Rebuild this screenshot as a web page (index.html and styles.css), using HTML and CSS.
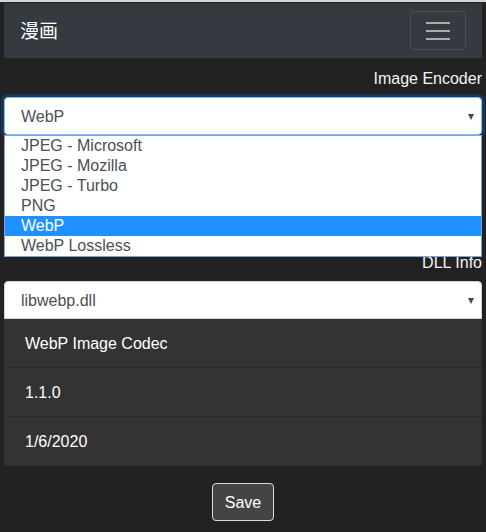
FILE: index.html
```html
<!DOCTYPE html>
<html lang="zh">
<head>
<meta charset="utf-8">
<title>漫画</title>
<link rel="stylesheet" href="styles.css">
</head>
<body>
<div class="page">
  <nav class="navbar">
    <span class="brand">漫画</span>
    <button class="toggler" type="button" aria-label="Toggle navigation">
      <span class="bar"></span>
      <span class="bar"></span>
      <span class="bar"></span>
    </button>
  </nav>
  <main class="content">
    <div class="group group-encoder">
      <label class="label">Image Encoder</label>
      <div class="select-wrap">
        <div class="select select-focus"><span class="select-text">WebP</span><span class="arrow"></span></div>
        <ul class="dropdown">
          <li class="option">JPEG - Microsoft</li>
          <li class="option">JPEG - Mozilla</li>
          <li class="option">JPEG - Turbo</li>
          <li class="option">PNG</li>
          <li class="option option-active">WebP</li>
          <li class="option">WebP Lossless</li>
        </ul>
      </div>
    </div>
    <div class="group">
      <label class="label">DLL Info</label>
      <div class="select select-attached"><span class="select-text">libwebp.dll</span><span class="arrow"></span></div>
      <ul class="list-group">
        <li class="list-item">WebP Image Codec</li>
        <li class="list-item">1.1.0</li>
        <li class="list-item">1/6/2020</li>
      </ul>
    </div>
    <div class="actions">
      <button class="btn" type="button">Save</button>
    </div>
  </main>
</div>
</body>
</html>
```
FILE: styles.css
```css
* { box-sizing: border-box; }

html, body {
  margin: 0;
  padding: 0;
  background: #222222;
}

body {
  font-family: "Liberation Sans", Arial, "Noto Sans CJK SC", sans-serif;
  font-size: 16px;
  color: #ffffff;
  border-top: 2px solid #d6d6d6;
}

.page {
  padding: 1px 4px 0;
}

.navbar {
  height: 55px;
  background: #343a40;
  padding: 8px 16px 8px 16px;
  display: flex;
  align-items: center;
  justify-content: space-between;
}

.brand {
  font-family: "Noto Sans CJK SC", "Noto Sans CJK JP", sans-serif;
  font-size: 19px;
  line-height: 24px;
  color: #ffffff;
  margin-top: -2px;
}

.toggler {
  width: 56px;
  height: 39px;
  background: transparent;
  border: 1px solid rgba(255, 255, 255, 0.1);
  border-radius: 4px;
  padding: 0;
  display: flex;
  flex-direction: column;
  align-items: center;
  justify-content: center;
  gap: 6px;
}

.bar {
  display: block;
  width: 24px;
  height: 2px;
  background: #a9abad;
}

.content {
  padding-top: 7px;
}

.group-encoder {
  margin-bottom: 114px;
}

.label {
  display: block;
  text-align: right;
  line-height: 24px;
  padding-top: 2px;
  margin-bottom: 6px;
  color: #f4f4f4;
}

.select-wrap {
  position: relative;
}

.select {
  height: 38px;
  background: #ffffff;
  border: 1px solid #ced4da;
  border-radius: 4px;
  padding: 1px 7px 0 16px;
  display: flex;
  align-items: center;
  justify-content: space-between;
  color: #495057;
}

.select-focus {
  border-color: #80bdff;
  box-shadow: 0 0 0 3px rgba(0, 123, 255, 0.25);
}

.select-attached {
  border-radius: 4px 4px 0 0;
}

.arrow {
  width: 0;
  height: 0;
  border-left: 3.5px solid transparent;
  border-right: 3.5px solid transparent;
  border-top: 6px solid #4a4a4a;
}

.dropdown {
  position: absolute;
  top: 100%;
  left: 0;
  right: 0;
  z-index: 10;
  margin: 0;
  padding: 0;
  list-style: none;
  background: #ffffff;
  border: 1px solid #7ba7dd;
}

.option {
  height: 20px;
  line-height: 20px;
  padding-left: 16px;
  color: #495057;
}

.option-active {
  background: #1e90ff;
  color: #ffffff;
}

.list-group {
  margin: 0;
  padding: 0;
  list-style: none;
  background: #333333;
  border-radius: 0 0 4px 4px;
}

.list-item {
  padding: 13px 21px 11px;
  line-height: 24px;
  border-bottom: 1px solid #2b2b2b;
  color: #ffffff;
}

.list-item:last-child {
  border-bottom-color: #303030;
  border-radius: 0 0 4px 4px;
}

.actions {
  margin-top: 17px;
  display: flex;
  justify-content: center;
}

.btn {
  height: 38px;
  padding: 1px 12px 0;
  background: #444444;
  border: 1px solid #dcdcdc;
  border-radius: 4px;
  color: #ffffff;
  font-family: "Liberation Sans", Arial, sans-serif;
  font-size: 16px;
}
```
